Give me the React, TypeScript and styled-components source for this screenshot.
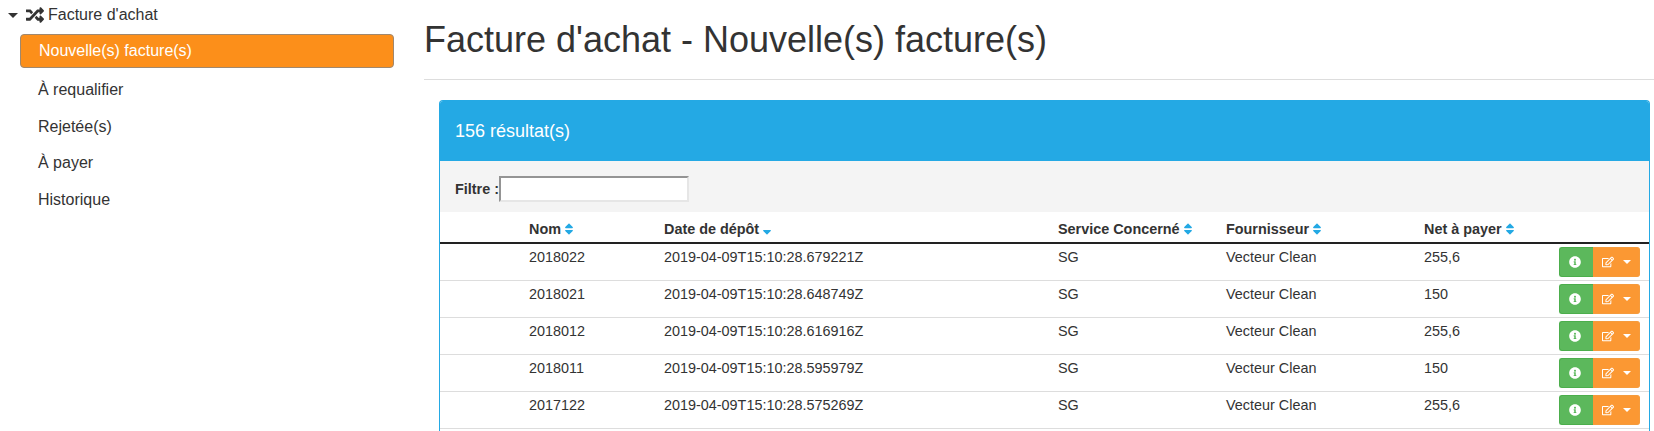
import { createGlobalStyle } from 'styled-components'
import styled from 'styled-components'
import { FaRandom, FaInfoCircle, FaRegEdit, FaSort, FaSortDown } from 'react-icons/fa'

const GlobalStyle = createGlobalStyle`
    html, body {
        margin: 0;
        height: 431px;
        overflow: hidden;
        background: #fff;
    }
    body {
        font-family: "Liberation Sans", Arial, sans-serif;
        font-size: 14.4px;
        line-height: 20px;
        color: #333;
    }
    * {
        box-sizing: border-box;
    }
`;

const Page = styled.div`
    display: flex;
    height: 431px;
`;

const Sidebar = styled.nav`
    flex: 0 0 424px;
    padding: 5px 30px 0 8px;
    font-size: 16px;
`;

const TreeRoot = styled.div`
    display: flex;
    align-items: center;
    height: 20px;
    margin-bottom: 9px;
`;

const Caret = styled.span<{ $color?: string; $size?: number }>`
    display: inline-block;
    width: 0;
    height: 0;
    border-left: ${p => p.$size ?? 5}px solid transparent;
    border-right: ${p => p.$size ?? 5}px solid transparent;
    border-top: ${p => p.$size ?? 5}px solid ${p => p.$color ?? '#333'};
`;

const RootIcon = styled(FaRandom)`
    margin-left: 8px;
    margin-right: 4px;
    font-size: 18px;
`;

const SubMenu = styled.ul`
    list-style: none;
    margin: 0 0 0 12px;
    padding: 0;
`;

const MenuItem = styled.li<{ $active?: boolean }>`
    height: ${p => (p.$active ? '34px' : '36.5px')};
    display: flex;
    align-items: center;
    padding-left: ${p => (p.$active ? '18px' : '17px')};
    border: 1px solid ${p => (p.$active ? '#a0886e' : 'transparent')};
    border-radius: 4px;
    background: ${p => (p.$active ? '#fc8f1a' : 'transparent')};
    color: ${p => (p.$active ? '#fff' : '#333')};
    margin-bottom: ${p => (p.$active ? '4px' : '0')};
`;

const Main = styled.main`
    flex: 1;
    min-width: 0;
`;

const PageHeader = styled.div`
    height: 80px;
    border-bottom: 1px solid #ddd;
    padding-top: 20px;
    margin-bottom: 20px;
`;

const Title = styled.h1`
    margin: 0;
    font-size: 36px;
    font-weight: 400;
    line-height: 40px;
`;

const Panel = styled.section`
    margin: 0 4px 0 15px;
    height: 331px;
    border: 1px solid #24a9e4;
    border-bottom: 0;
    border-radius: 4px 4px 0 0;
    overflow: hidden;
`;

const PanelHeading = styled.div`
    height: 60px;
    background: #24a9e4;
    color: #fff;
    font-size: 18px;
    display: flex;
    align-items: center;
    padding-left: 15px;
`;

const FilterBar = styled.div`
    height: 51px;
    background: #f4f4f4;
    display: flex;
    align-items: center;
    padding: 4px 0 0 15px;
    font-weight: 700;
`;

const FilterInput = styled.input`
    width: 190px;
    height: 26px;
    padding: 1px 2px;
    background: #fff;
    border-width: 2px;
    border-style: solid;
    border-color: #949494 #e6e6e6 #e6e6e6 #949494;
`;

const Table = styled.table`
    width: 100%;
    table-layout: fixed;
    border-collapse: collapse;
`;

const Th = styled.th`
    height: 31px;
    padding: 4px 0 0 1px;
    text-align: left;
    font-weight: 700;
    white-space: nowrap;
    border-bottom: 2px solid #222;
`;

const SortIcon = styled(FaSort)`
    margin-left: 1px;
    color: #24a9e4;
    font-size: 14px;
    vertical-align: -2px;
`;

const SortedIcon = styled(FaSortDown)`
    margin-left: 1px;
    color: #24a9e4;
    font-size: 14px;
    vertical-align: -2px;
`;

const Td = styled.td`
    height: 37px;
    padding: 3px 0 0 1px;
    vertical-align: top;
    border-bottom: 1px solid #ddd;
`;

const ActionCell = styled(Td)`
    padding: 3px 0 0;
`;

const ButtonGroup = styled.div`
    display: flex;
    height: 30px;
`;

const InfoButton = styled.button`
    width: 34px;
    padding: 0 3px 0 0;
    display: flex;
    align-items: center;
    justify-content: center;
    color: #fff;
    font-size: 12px;
    background: #5cb85c;
    border: 1px solid #4cae4c;
    border-right: 0;
    border-radius: 3px 0 0 3px;
`;

const EditButton = styled.button`
    width: 47px;
    padding: 0 0 0 1px;
    display: flex;
    align-items: center;
    justify-content: center;
    gap: 9px;
    color: #fff;
    font-size: 12px;
    background: #fb9833;
    border: 1px solid #f59b3c;
    border-left: 0;
    border-radius: 0 3px 3px 0;
`;

const rows = [
    { nom: '2018022', date: '2019-04-09T15:10:28.679221Z', net: '255,6' },
    { nom: '2018021', date: '2019-04-09T15:10:28.648749Z', net: '150' },
    { nom: '2018012', date: '2019-04-09T15:10:28.616916Z', net: '255,6' },
    { nom: '2018011', date: '2019-04-09T15:10:28.595979Z', net: '150' },
    { nom: '2017122', date: '2019-04-09T15:10:28.575269Z', net: '255,6' },
];

export default function App() {
    return (
        <Page>
            <GlobalStyle />
            <Sidebar>
                <TreeRoot>
                    <Caret />
                    <RootIcon />
                    Facture d'achat
                </TreeRoot>
                <SubMenu>
                    <MenuItem $active>Nouvelle(s) facture(s)</MenuItem>
                    <MenuItem>À requalifier</MenuItem>
                    <MenuItem>Rejetée(s)</MenuItem>
                    <MenuItem>À payer</MenuItem>
                    <MenuItem>Historique</MenuItem>
                </SubMenu>
            </Sidebar>
            <Main>
                <PageHeader>
                    <Title>Facture d'achat - Nouvelle(s) facture(s)</Title>
                </PageHeader>
                <Panel>
                    <PanelHeading>156 résultat(s)</PanelHeading>
                    <FilterBar>
                        Filtre :
                        <FilterInput />
                    </FilterBar>
                    <Table>
                        <colgroup>
                            <col width={88} />
                            <col width={135} />
                            <col width={394} />
                            <col width={168} />
                            <col width={198} />
                            <col width={136} />
                            <col />
                        </colgroup>
                        <thead>
                            <tr>
                                <Th />
                                <Th>Nom<SortIcon /></Th>
                                <Th>Date de dépôt<SortedIcon /></Th>
                                <Th>Service Concerné<SortIcon /></Th>
                                <Th>Fournisseur<SortIcon /></Th>
                                <Th>Net à payer<SortIcon /></Th>
                                <Th />
                            </tr>
                        </thead>
                        <tbody>
                            {rows.map(row => (
                                <tr key={row.nom}>
                                    <Td />
                                    <Td>{row.nom}</Td>
                                    <Td>{row.date}</Td>
                                    <Td>SG</Td>
                                    <Td>Vecteur Clean</Td>
                                    <Td>{row.net}</Td>
                                    <ActionCell>
                                        <ButtonGroup>
                                            <InfoButton><FaInfoCircle /></InfoButton>
                                            <EditButton>
                                                <FaRegEdit />
                                                <Caret $color="#fff" $size={4} />
                                            </EditButton>
                                        </ButtonGroup>
                                    </ActionCell>
                                </tr>
                            ))}
                        </tbody>
                    </Table>
                </Panel>
            </Main>
        </Page>
    )
}
